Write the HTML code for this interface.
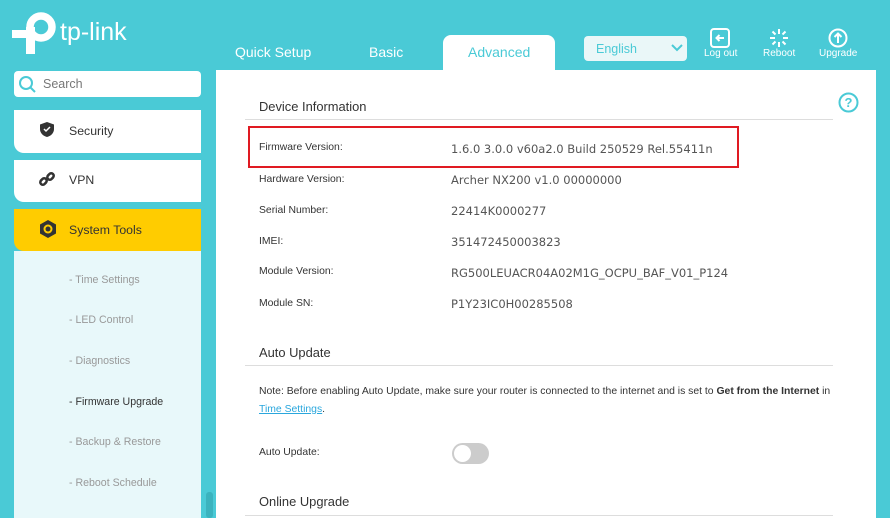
<!DOCTYPE html>
<html><head><style>
*{margin:0;padding:0;box-sizing:border-box}
body{width:890px;height:518px;overflow:hidden;background:#4acad6;font-family:"Liberation Sans",Arial,sans-serif;position:relative}
.a{position:absolute;white-space:nowrap}
.side{position:absolute;left:14px;width:187px;background:#fff}
.lbl{position:absolute;left:259px;font-size:10.4px;color:#333}
.val{position:absolute;left:451px;font-family:"DejaVu Sans",sans-serif;font-size:11.5px;color:#555}
.sub{position:absolute;left:69px;font-size:10.6px;color:#999}
.h{position:absolute;left:259px;font-size:12.9px;color:#333}
</style></head><body>
<svg class="a" style="left:0;top:0" width="60" height="60">
<circle cx="41" cy="27" r="11" stroke="#fff" stroke-width="7.5" fill="none"/>
<rect x="26" y="27" width="9" height="27" fill="#fff"/>
<rect x="12" y="30" width="23" height="8" fill="#fff"/>
</svg>
<div class="a" style="left:60px;top:18px;font-size:25px;color:#fff">tp-link</div>
<div class="a" style="left:235px;top:44px;font-size:14px;color:#fff">Quick Setup</div>
<div class="a" style="left:369px;top:44px;font-size:14px;color:#fff">Basic</div>
<div class="a" style="left:443px;top:35px;width:112px;height:40px;background:#fff;border-radius:8px 8px 0 0"></div>
<div class="a" style="left:468px;top:44px;font-size:14px;color:#4acad6">Advanced</div>
<div class="a" style="left:584px;top:36px;width:103px;height:25px;background:#eaf7f8;border-radius:4px"></div>
<div class="a" style="left:596px;top:42px;font-size:12.5px;color:#4acad6">English</div>
<svg class="a" style="left:671px;top:44px" width="12" height="8"><path d="M1 1l5 5 5-5" stroke="#4acad6" stroke-width="2" fill="none"/></svg>
<svg class="a" style="left:710px;top:28px" width="20" height="20"><rect x="1" y="1" width="18" height="18" rx="3" stroke="#fff" stroke-width="2" fill="none"/><path d="M14 10H7M9.5 7L6.5 10l3 3" stroke="#fff" stroke-width="2" fill="none"/></svg>
<div class="a" style="left:704px;top:48px;font-size:10px;color:#fff">Log out</div>
<svg class="a" style="left:769px;top:28px" width="20" height="20" stroke="#fff" stroke-width="2"><path d="M10 1v5M10 14v5M1 10h5M14 10h5M3.5 3.5l3 3M13.5 13.5l3 3M3.5 16.5l3-3M13.5 6.5l3-3"/></svg>
<div class="a" style="left:763px;top:48px;font-size:10px;color:#fff">Reboot</div>
<svg class="a" style="left:828px;top:28px" width="20" height="20"><circle cx="10" cy="10" r="8.5" stroke="#fff" stroke-width="2" fill="none"/><path d="M10 15V5.5M6.5 9l3.5-3.5 3.5 3.5" stroke="#fff" stroke-width="2" fill="none"/></svg>
<div class="a" style="left:819px;top:48px;font-size:10px;color:#fff">Upgrade</div>

<div class="side" style="top:71px;height:26px;border-radius:4px"></div>
<svg class="a" style="left:18px;top:75px" width="20" height="20"><circle cx="8" cy="8" r="6" stroke="#4acad6" stroke-width="2" fill="none"/><path d="M12.5 12.5L17 17" stroke="#4acad6" stroke-width="2"/></svg>
<div class="a" style="left:43px;top:77px;font-size:12.5px;color:#777">Search</div>
<div class="side" style="top:110px;height:43px;border-radius:0 0 0 10px"></div>
<svg class="a" style="left:40px;top:122px" width="14" height="15"><path d="M7 0L14 2.5V7c0 4-3 7-7 8C3 14 0 11 0 7V2.5z" fill="#333"/><path d="M4 7l2 2 4-4" stroke="#fff" stroke-width="1.5" fill="none"/></svg>
<div class="a" style="left:69px;top:124px;font-size:12.3px;color:#333">Security</div>
<div class="side" style="top:160px;height:42px;border-radius:0 0 0 10px"></div>
<svg class="a" style="left:39px;top:171px" width="16" height="16" stroke="#333" stroke-width="2.5" fill="none"><rect x="1" y="8" width="7" height="5" rx="2.5" transform="rotate(-45 4.5 10.5)"/><rect x="8" y="3" width="7" height="5" rx="2.5" transform="rotate(-45 11.5 5.5)"/></svg>
<div class="a" style="left:69px;top:173px;font-size:12.3px;color:#333">VPN</div>
<div class="side" style="top:209px;height:42px;background:#ffcc00;border-radius:0 0 0 10px"></div>
<svg class="a" style="left:38px;top:219px" width="20" height="20"><path d="M10 1l8 4.5v9L10 19l-8-4.5v-9z" fill="#333"/><circle cx="10" cy="10" r="4.5" fill="#ffcc00"/><circle cx="10" cy="10" r="2.5" fill="#333"/></svg>
<div class="a" style="left:69px;top:223px;font-size:12.3px;color:#333">System Tools</div>
<div class="side" style="top:251px;height:267px;background:#e8f8fa"></div>
<div class="sub" style="top:274px">- Time Settings</div>
<div class="sub" style="top:314px">- LED Control</div>
<div class="sub" style="top:355px">- Diagnostics</div>
<div class="sub" style="top:396px;color:#333">- Firmware Upgrade</div>
<div class="sub" style="top:436px">- Backup &amp; Restore</div>
<div class="sub" style="top:477px">- Reboot Schedule</div>
<div class="a" style="left:206px;top:492px;width:7px;height:26px;background:#3bb3be;border-radius:3px"></div>

<div class="a" style="left:216px;top:70px;width:660px;height:448px;background:#fff"></div>
<svg class="a" style="left:838px;top:92px" width="21" height="21"><circle cx="10.5" cy="10.5" r="9" stroke="#4acad6" stroke-width="2" fill="none"/><text x="10.5" y="15" text-anchor="middle" font-size="13" font-weight="bold" fill="#4acad6" font-family="Liberation Sans">?</text></svg>
<div class="h" style="top:99px">Device Information</div>
<div class="a" style="left:245px;top:119px;width:588px;height:1px;background:#ddd"></div>
<div class="a" style="left:248px;top:126px;width:491px;height:42px;border:2px solid #e01a22"></div>
<div class="lbl" style="top:142px">Firmware Version:</div><div class="val" style="top:142px">1.6.0 3.0.0 v60a2.0 Build 250529 Rel.55411n</div>
<div class="lbl" style="top:174px">Hardware Version:</div><div class="val" style="top:173px">Archer NX200 v1.0 00000000</div>
<div class="lbl" style="top:205px">Serial Number:</div><div class="val" style="top:204px">22414K0000277</div>
<div class="lbl" style="top:236px">IMEI:</div><div class="val" style="top:235px">351472450003823</div>
<div class="lbl" style="top:266px">Module Version:</div><div class="val" style="top:266px">RG500LEUACR04A02M1G_OCPU_BAF_V01_P124</div>
<div class="lbl" style="top:298px">Module SN:</div><div class="val" style="top:297px">P1Y23IC0H00285508</div>
<div class="h" style="top:345px">Auto Update</div>
<div class="a" style="left:245px;top:365px;width:588px;height:1px;background:#ddd"></div>
<div class="lbl" style="top:386px">Note: Before enabling Auto Update, make sure your router is connected to the internet and is set to <b>Get from the Internet</b> in</div>
<div class="lbl" style="top:404px"><span style="color:#2aa7dd;text-decoration:underline">Time Settings</span>.</div>
<div class="lbl" style="top:447px">Auto Update:</div>
<div class="a" style="left:452px;top:443px;width:37px;height:21px;background:#ccc;border-radius:11px"></div>
<div class="a" style="left:454px;top:445px;width:17px;height:17px;background:#fff;border-radius:50%"></div>
<div class="h" style="top:494px">Online Upgrade</div>
<div class="a" style="left:245px;top:515px;width:588px;height:1px;background:#ddd"></div>
</body></html>
